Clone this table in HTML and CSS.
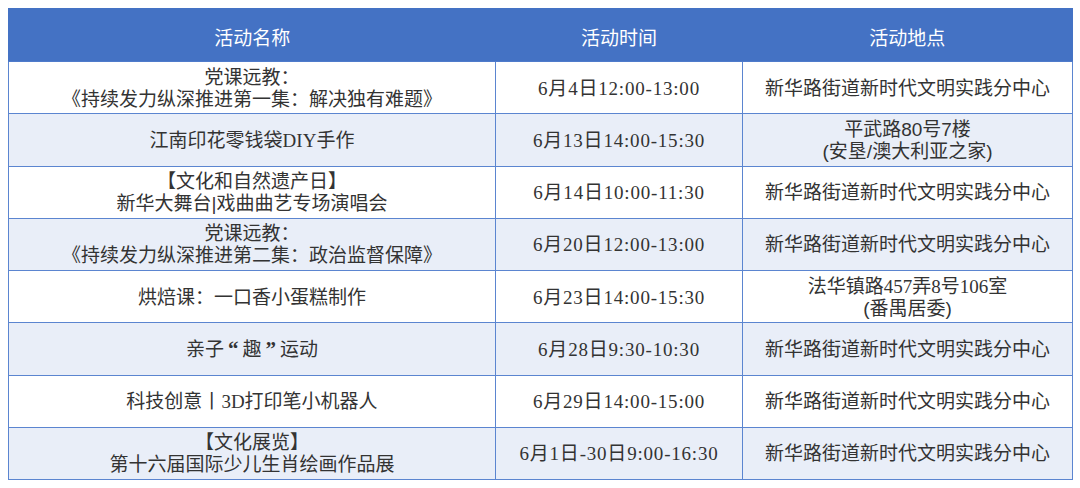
FILE: index.html
```html
<!DOCTYPE html>
<html lang="zh-CN">
<head>
<meta charset="utf-8">
<title>活动安排</title>
<link rel="stylesheet" href="styles.css">
</head>
<body>
<table class="schedule">
  <colgroup>
    <col class="col-name">
    <col class="col-time">
    <col class="col-place">
  </colgroup>
  <thead>
    <tr class="head-row">
      <th>活动名称</th>
      <th>活动时间</th>
      <th>活动地点</th>
    </tr>
  </thead>
  <tbody>
    <tr>
      <td>党课远教：<br>《持续发力纵深推进第一集：解决独有难题》</td>
      <td class="time">6月4日12:00-13:00</td>
      <td>新华路街道新时代文明实践分中心</td>
    </tr>
    <tr class="band">
      <td>江南印花零钱袋<span class="latin">DIY</span>手作</td>
      <td class="time">6月13日14:00-15:30</td>
      <td>平武路80号7楼<br>(安垦/澳大利亚之家)</td>
    </tr>
    <tr>
      <td>【文化和自然遗产日】<br>新华大舞台|戏曲曲艺专场演唱会</td>
      <td class="time">6月14日10:00-11:30</td>
      <td>新华路街道新时代文明实践分中心</td>
    </tr>
    <tr class="band">
      <td>党课远教：<br>《持续发力纵深推进第二集：政治监督保障》</td>
      <td class="time">6月20日12:00-13:00</td>
      <td>新华路街道新时代文明实践分中心</td>
    </tr>
    <tr>
      <td>烘焙课：一口香小蛋糕制作</td>
      <td class="time">6月23日14:00-15:30</td>
      <td>法华镇路<span class="latin">457</span>弄<span class="latin">8</span>号<span class="latin">106</span>室<br>(番禺居委)</td>
    </tr>
    <tr class="band">
      <td>亲子<span class="quote">“</span>趣<span class="quote">”</span>运动</td>
      <td class="time">6月28日9:30-10:30</td>
      <td>新华路街道新时代文明实践分中心</td>
    </tr>
    <tr>
      <td>科技创意丨<span class="latin">3D</span>打印笔小机器人</td>
      <td class="time">6月29日14:00-15:00</td>
      <td>新华路街道新时代文明实践分中心</td>
    </tr>
    <tr class="band">
      <td>【文化展览】<br>第十六届国际少儿生肖绘画作品展</td>
      <td class="time">6月1日-30日9:00-16:30</td>
      <td>新华路街道新时代文明实践分中心</td>
    </tr>
  </tbody>
</table>
</body>
</html>
```

FILE: styles.css
```css
html, body {
  margin: 0;
  padding: 0;
  background: #ffffff;
}

body {
  padding: 8px;
  font-family: "Liberation Sans", "Noto Sans CJK SC", sans-serif;
  color: #333333;
}

.schedule {
  width: 1064px;
  border-collapse: collapse;
  table-layout: fixed;
  font-size: 19px;
  border: 1px solid #4472c4;
}

.col-name { width: 487px; }
.col-time { width: 247px; }
.col-place { width: 330px; }

.head-row {
  height: 53px;
  background: #4472c4;
}

.head-row th {
  color: #ffffff;
  font-weight: 400;
  text-align: center;
  vertical-align: middle;
  padding: 3px 0 0 0;
  border: none;
  border-bottom: 1px solid #4f7bcb;
}

tbody tr {
  height: 52.25px;
  background: #ffffff;
}

tbody tr.band {
  background: #e9eef8;
}

tbody td {
  text-align: center;
  vertical-align: middle;
  padding: 2px 0 0 0;
  line-height: 22px;
  border: 1px solid #5b85d0;
  white-space: nowrap;
}

.time {
  font-family: "Liberation Serif", "Noto Sans CJK SC", serif;
  letter-spacing: 0.8px;
}

.latin {
  font-family: "Liberation Serif", serif;
}

.quote {
  font-family: "Liberation Serif", serif;
  font-weight: 700;
  font-size: 21px;
  margin: 0 4px;
}
```
